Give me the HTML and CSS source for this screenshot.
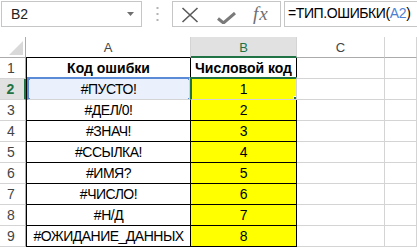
FILE: index.html
```html
<!DOCTYPE html>
<html lang="ru">
<head>
    <meta charset="UTF-8">
    <title>ТИП.ОШИБКИ</title>
    <link rel="stylesheet" href="styles.css">
</head>
<body>

    <div class="toolbar">
        <div class="namebox">
            <span>B2</span>
            <svg class="drop" width="7" height="4" viewBox="0 0 7 4"><path d="M0 0H7L3.5 4Z" fill="#6f6f6f"/></svg>
        </div>
        <div class="dots">
            <svg width="3" height="14" viewBox="0 0 3 14">
                <rect x="0.5" y="0" width="2" height="2" fill="#b4b4b4"/>
                <rect x="0.5" y="6" width="2" height="2" fill="#b4b4b4"/>
                <rect x="0.5" y="12" width="2" height="2" fill="#b4b4b4"/>
            </svg>
        </div>
        <div class="fnbox">
            <svg class="cancel" width="18" height="16" viewBox="0 0 18 16">
                <path d="M1.5 1L16.5 15M16.5 1L1.5 15" stroke="#5a5a5a" stroke-width="1.6" fill="none"/>
            </svg>
            <svg class="enter" width="19" height="12" viewBox="0 0 19 12">
                <path d="M1 6.5L6.5 11L18 1" stroke="#7a7a7a" stroke-width="3" fill="none"/>
            </svg>
            <span class="fx">fx</span>
        </div>
        <div class="formula">=ТИП.ОШИБКИ(<span class="ref">A2</span>)</div>
    </div>

    <div class="sheet">
        <div class="hd corner"><svg width="14" height="14" viewBox="0 0 14 14"><path d="M14 0V14H0Z" fill="#d9d9d9"/></svg></div>
        <div class="hd hd-a">A</div>
        <div class="hd hd-sel">B</div>
        <div class="hd">C</div>
        <div class="hd"></div>

        <div class="rh">1</div>
        <div class="c a bold">Код ошибки</div>
        <div class="c b bold">Числовой код</div>
        <div class="c"></div>
        <div class="c"></div>

        <div class="rh rh-sel">2</div>
        <div class="c a ref-cell">#ПУСТО!</div>
        <div class="c b y">1</div>
        <div class="c"></div>
        <div class="c"></div>

        <div class="rh">3</div>
        <div class="c a">#ДЕЛ/0!</div>
        <div class="c b y">2</div>
        <div class="c"></div>
        <div class="c"></div>

        <div class="rh">4</div>
        <div class="c a">#ЗНАЧ!</div>
        <div class="c b y">3</div>
        <div class="c"></div>
        <div class="c"></div>

        <div class="rh">5</div>
        <div class="c a">#ССЫЛКА!</div>
        <div class="c b y">4</div>
        <div class="c"></div>
        <div class="c"></div>

        <div class="rh">6</div>
        <div class="c a">#ИМЯ?</div>
        <div class="c b y">5</div>
        <div class="c"></div>
        <div class="c"></div>

        <div class="rh">7</div>
        <div class="c a">#ЧИСЛО!</div>
        <div class="c b y">6</div>
        <div class="c"></div>
        <div class="c"></div>

        <div class="rh">8</div>
        <div class="c a">#Н/Д</div>
        <div class="c b y">7</div>
        <div class="c"></div>
        <div class="c"></div>

        <div class="rh">9</div>
        <div class="c a">#ОЖИДАНИЕ_ДАННЫХ</div>
        <div class="c b y">8</div>
        <div class="c"></div>
        <div class="c"></div>

        <!-- formula reference highlight and active cell -->
        <div class="ref-box">
            <i class="knob tl"></i><i class="knob tr"></i><i class="knob bl"></i><i class="knob br"></i>
        </div>
        <div class="active-box"><i class="handle"></i></div>
    </div>

</body>
</html>
```

FILE: styles.css
```css
body {
    margin: 0;
    background: #fff;
    font-family: 'Liberation Sans', Arial, sans-serif;
    font-size: 14px;
    color: #000;
    overflow: hidden;
}

/* formula bar */
.toolbar {
    display: flex;
    height: 26px;
    padding: 1px 0 0 1px;
}

.namebox {
    box-sizing: border-box;
    width: 141px;
    height: 26px;
    border: 1px solid #c6c6c6;
    display: flex;
    align-items: center;
    justify-content: space-between;
    padding: 0 7px 0 9px;
    font-size: 14px;
    color: #222;
}

.drop {
    margin-top: -1px;
}

.dots {
    width: 30px;
    display: flex;
    align-items: center;
    justify-content: center;
}

.fnbox {
    box-sizing: border-box;
    width: 109px;
    height: 26px;
    border: 1px solid #c6c6c6;
    display: flex;
    align-items: center;
    padding-left: 8px;
}

.cancel {
    margin-top: 1px;
}

.enter {
    margin-left: 18px;
    margin-top: 7px;
}

.fx {
    margin-left: 17px;
    font-family: 'Liberation Serif', 'Times New Roman', serif;
    font-style: italic;
    font-size: 19px;
    color: #6f6f6f;
    letter-spacing: 1px;
}

.formula {
    box-sizing: border-box;
    flex: 1;
    height: 26px;
    margin-left: 3px;
    margin-right: -4px;
    border: 1px solid #c6c6c6;
    padding-left: 3px;
    line-height: 23px;
    letter-spacing: -0.4px;
    white-space: nowrap;
    overflow: hidden;
}

.ref {
    color: #4e80d2;
}

/* worksheet grid */
.sheet {
    position: relative;
    margin-top: 10px;
    display: grid;
    grid-template-columns: 26px 165px 106px 88px 1fr;
    grid-auto-rows: 21px;
}

.sheet > div {
    box-sizing: border-box;
    border-right: 1px solid #d4d4d4;
    border-bottom: 1px solid #d4d4d4;
    line-height: 20px;
    text-align: center;
    white-space: nowrap;
    overflow: hidden;
}

.sheet .c {
    letter-spacing: -0.5px;
}

.sheet .hd {
    border-bottom-color: #ababab;
    color: #444;
    font-size: 13px;
    line-height: 21px;
}

.sheet .corner {
    border-right-color: #ababab;
    display: flex;
    align-items: flex-end;
    justify-content: flex-end;
    padding: 0 2px 2px 0;
}

.sheet .hd-a {
    border-bottom-color: #000;
}

.sheet .hd-sel {
    background: #e1e1e1;
    color: #217346;
    border-bottom: 2px solid #217346;
}

.sheet .rh {
    border-right-color: #ababab;
    color: #444;
    padding-right: 3px;
}

.sheet .rh-sel {
    background: #e1e1e1;
    color: #217346;
    font-weight: bold;
    border-right: 2px solid #217346;
}

.sheet .a {
    border-left: 1px solid #000;
    border-right-color: #000;
    border-bottom-color: #000;
}

.sheet .b {
    border-right-color: #000;
    border-bottom-color: #000;
}

.sheet .y {
    background: #ffff00;
}

.sheet .bold {
    font-weight: bold;
    letter-spacing: 0;
}

.sheet .ref-cell {
    background: #ebf1fc;
}

.ref-box {
    position: absolute;
    left: 27px;
    top: 40px;
    width: 163px;
    height: 23px;
    box-sizing: border-box;
    border: 2px solid #5b8ad6;
}

.knob {
    position: absolute;
    width: 4px;
    height: 4px;
    background: #5b8ad6;
}

.tl { left: -3px; top: -3px; }
.tr { right: -3px; top: -3px; }
.bl { left: -3px; bottom: -3px; }
.br { right: -3px; bottom: -3px; }

.active-box {
    position: absolute;
    left: 190px;
    top: 40px;
    width: 107px;
    height: 23px;
    box-sizing: border-box;
    border: 2px solid #217346;
}

.handle {
    position: absolute;
    right: -5px;
    bottom: -5px;
    width: 6px;
    height: 6px;
    background: #217346;
    border: 1px solid #fff;
}
```
